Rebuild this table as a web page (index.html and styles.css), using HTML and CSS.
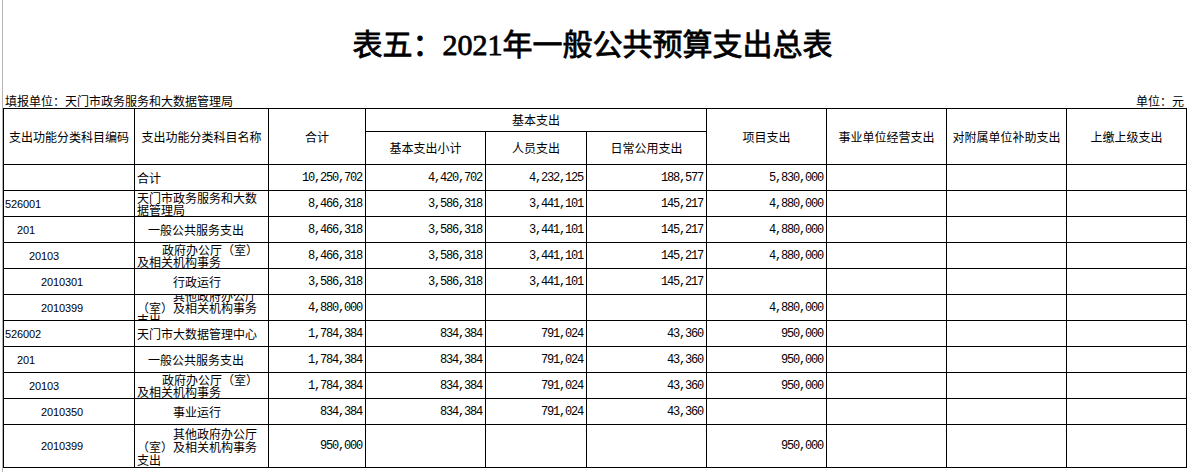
FILE: index.html
```html
<!DOCTYPE html>
<html lang="zh-CN">
<head>
<meta charset="utf-8">
<title>表五：2021年一般公共预算支出总表</title>
<link rel="stylesheet" href="styles.css">
</head>
<body>
<div class="sheet">
  <div class="inner">
    <h1 class="title">表五：2021年一般公共预算支出总表</h1>
    <div class="info">
      <span>填报单位：天门市政务服务和大数据管理局</span>
      <span>单位：元</span>
    </div>
    <div class="grid">
      <div class="h r2">支出功能分类科目编码</div>
      <div class="h r2">支出功能分类科目名称</div>
      <div class="h r2">合计</div>
      <div class="h c3">基本支出</div>
      <div class="h r2">项目支出</div>
      <div class="h r2">事业单位经营支出</div>
      <div class="h r2">对附属单位补助支出</div>
      <div class="h r2">上缴上级支出</div>
      <div class="h">基本支出小计</div>
      <div class="h">人员支出</div>
      <div class="h">日常公用支出</div>

      <div class="d code"></div>
      <div class="d txt"><span>合计</span></div>
      <div class="d num">10,250,702</div>
      <div class="d num">4,420,702</div>
      <div class="d num">4,232,125</div>
      <div class="d num">188,577</div>
      <div class="d num">5,830,000</div>
      <div class="d"></div><div class="d"></div><div class="d"></div>

      <div class="d code">526001</div>
      <div class="d txt"><span>天门市政务服务和大数</span><span>据管理局</span></div>
      <div class="d num">8,466,318</div>
      <div class="d num">3,586,318</div>
      <div class="d num">3,441,101</div>
      <div class="d num">145,217</div>
      <div class="d num">4,880,000</div>
      <div class="d"></div><div class="d"></div><div class="d"></div>

      <div class="d code l1">201</div>
      <div class="d txt"><span class="i1">一般公共服务支出</span></div>
      <div class="d num">8,466,318</div>
      <div class="d num">3,586,318</div>
      <div class="d num">3,441,101</div>
      <div class="d num">145,217</div>
      <div class="d num">4,880,000</div>
      <div class="d"></div><div class="d"></div><div class="d"></div>

      <div class="d code l2">20103</div>
      <div class="d txt"><span class="i2">政府办公厅（室）</span><span>及相关机构事务</span></div>
      <div class="d num">8,466,318</div>
      <div class="d num">3,586,318</div>
      <div class="d num">3,441,101</div>
      <div class="d num">145,217</div>
      <div class="d num">4,880,000</div>
      <div class="d"></div><div class="d"></div><div class="d"></div>

      <div class="d code l3">2010301</div>
      <div class="d txt"><span class="i3">行政运行</span></div>
      <div class="d num">3,586,318</div>
      <div class="d num">3,586,318</div>
      <div class="d num">3,441,101</div>
      <div class="d num">145,217</div>
      <div class="d num"></div>
      <div class="d"></div><div class="d"></div><div class="d"></div>

      <div class="d code l3">2010399</div>
      <div class="d txt"><span class="i3">其他政府办公厅</span><span>（室）及相关机构事务</span><span>支出</span></div>
      <div class="d num">4,880,000</div>
      <div class="d num"></div>
      <div class="d num"></div>
      <div class="d num"></div>
      <div class="d num">4,880,000</div>
      <div class="d"></div><div class="d"></div><div class="d"></div>

      <div class="d code">526002</div>
      <div class="d txt"><span>天门市大数据管理中心</span></div>
      <div class="d num">1,784,384</div>
      <div class="d num">834,384</div>
      <div class="d num">791,024</div>
      <div class="d num">43,360</div>
      <div class="d num">950,000</div>
      <div class="d"></div><div class="d"></div><div class="d"></div>

      <div class="d code l1">201</div>
      <div class="d txt"><span class="i1">一般公共服务支出</span></div>
      <div class="d num">1,784,384</div>
      <div class="d num">834,384</div>
      <div class="d num">791,024</div>
      <div class="d num">43,360</div>
      <div class="d num">950,000</div>
      <div class="d"></div><div class="d"></div><div class="d"></div>

      <div class="d code l2">20103</div>
      <div class="d txt"><span class="i2">政府办公厅（室）</span><span>及相关机构事务</span></div>
      <div class="d num">1,784,384</div>
      <div class="d num">834,384</div>
      <div class="d num">791,024</div>
      <div class="d num">43,360</div>
      <div class="d num">950,000</div>
      <div class="d"></div><div class="d"></div><div class="d"></div>

      <div class="d code l3">2010350</div>
      <div class="d txt"><span class="i3">事业运行</span></div>
      <div class="d num">834,384</div>
      <div class="d num">834,384</div>
      <div class="d num">791,024</div>
      <div class="d num">43,360</div>
      <div class="d num"></div>
      <div class="d"></div><div class="d"></div><div class="d"></div>

      <div class="d code l3">2010399</div>
      <div class="d txt tall"><span class="i3">其他政府办公厅</span><span>（室）及相关机构事务</span><span>支出</span></div>
      <div class="d num">950,000</div>
      <div class="d num"></div>
      <div class="d num"></div>
      <div class="d num"></div>
      <div class="d num">950,000</div>
      <div class="d"></div><div class="d"></div><div class="d"></div>
    </div>
  </div>
</div>
</body>
</html>
```

FILE: styles.css
```css
html, body {
  margin: 0;
  padding: 0;
  background: #ffffff;
}

body {
  font-family: "Noto Sans CJK SC", "Noto Sans", sans-serif;
  font-size: 12px;
  color: #000000;
}

.sheet {
  margin-left: 2px;
  border-left: 1px solid #b4b4b4;
  min-height: 472px;
  box-sizing: border-box;
}

.inner {
  width: 1184px;
}

.title {
  margin: 0;
  height: 90px;
  line-height: 90px;
  padding-right: 5px;
  text-align: center;
  font-family: "Liberation Serif", "Noto Sans CJK SC", serif;
  font-size: 30px;
  font-weight: 400;
  -webkit-text-stroke: 0.8px #000000;
}

.info {
  height: 18px;
  box-sizing: border-box;
  padding: 4px 3px 0 2px;
  line-height: 14px;
  display: flex;
  justify-content: space-between;
  font-size: 12px;
}

.grid {
  display: grid;
  grid-template-columns: 130px 133px 96px 119px 100px 119px 119px 119px 119px 119px;
  grid-template-rows: 22px 32px repeat(10, 25px) 42px;
  gap: 1px;
  background: #000000;
  border: 1px solid #000000;
}

.grid > div {
  background: #ffffff;
  overflow: hidden;
  white-space: nowrap;
}

.h {
  display: flex;
  align-items: center;
  justify-content: center;
  font-size: 12px;
  line-height: 14px;
}

.r2 {
  grid-row: span 2;
}

.c3 {
  grid-column: span 3;
}

.d {
  display: flex;
  flex-direction: column;
  justify-content: center;
  line-height: 12px;
}

.txt {
  align-items: flex-start;
  padding-left: 2px;
}

.txt.tall {
  line-height: 13px;
}

.txt span {
  display: block;
}

.i1 { padding-left: 11px; }
.i2 { padding-left: 25px; }
.i3 { padding-left: 36px; }

.code {
  align-items: flex-start;
  font-family: "Liberation Sans", "DejaVu Sans", sans-serif;
  font-size: 11px;
  letter-spacing: -0.1px;
  padding-left: 1px;
}

.code.l1 { padding-left: 13px; }
.code.l2 { padding-left: 25px; }
.code.l3 { padding-left: 37px; }

.num {
  align-items: flex-end;
  font-family: "Liberation Mono", "DejaVu Sans Mono", monospace;
  font-size: 12px;
  letter-spacing: -1.2px;
  padding-right: 3px;
}
```
